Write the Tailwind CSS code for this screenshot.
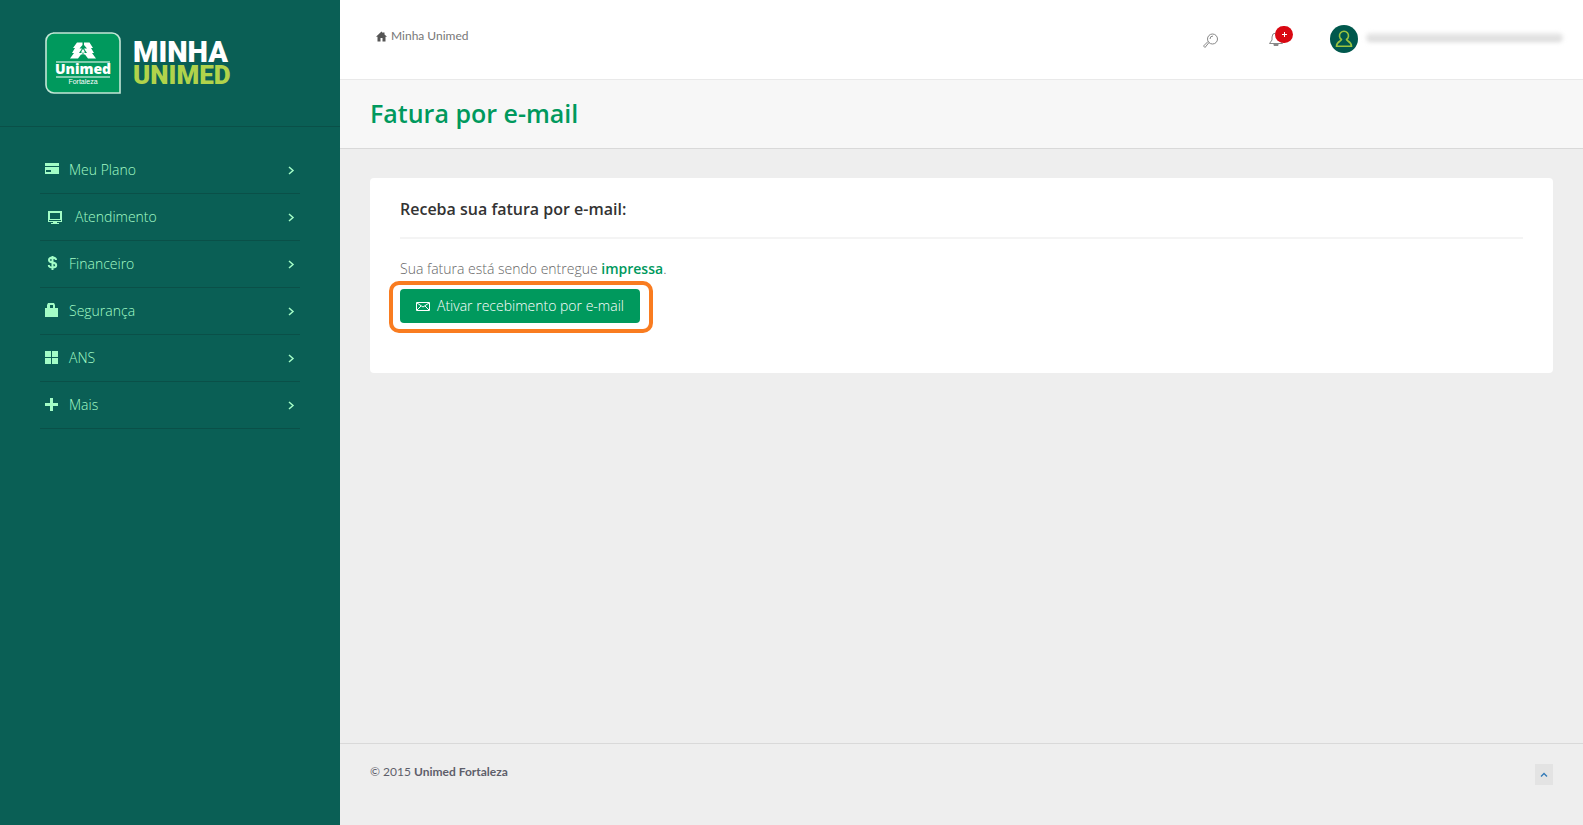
<!DOCTYPE html>
<html lang="pt-BR">
  <head>
    <meta charset="UTF-8" />
    <meta name="viewport" content="width=device-width, initial-scale=1" />
    <title>Minha Unimed - Fatura por e-mail</title>
    <script src="https://cdn.jsdelivr.net/npm/@tailwindcss/browser@4"></script>
  </head>
  <body class="flex min-h-screen bg-[#eeeeee] font-['Open_Sans',sans-serif] text-sm">
    <!-- Sidebar -->
    <aside class="w-[340px] shrink-0 bg-[#0a5f55] font-light text-[#a3fcc6]">
      <a href="#" aria-label="Minha Unimed" class="flex h-[127px] items-start gap-3 border-b border-[#0a5048] pt-8 pl-[45px]">
        <svg class="h-[62px] w-[76px]" viewBox="0 0 76 62">
          <path d="M8 1H67a8 8 0 0 1 8 8V61H9a8 8 0 0 1-8-8V9a8 8 0 0 1 8-8Z" fill="#00995d" stroke="#c3e6d6" stroke-width="1.6" />
          <path d="M32 10.500h5.500v2.500l-3 3.500h2.500l-3 4.500h2.500v-2l1.500-2 1.500 2v2h2.500l-3-4.500H42l-3-3.500v-2.500h5.500l3.500 5.500h-2l3 5h-2l4 5.500h-8l-3-4h-1.500v-1.500l-.5-1-.5 1v1.500H36l-3 4h-8l4-5.500h-2l3-5h-2Z" fill="#fff" />
          <path d="M11 29.500h54v1H11ZM11 44.500h54v1H11Z" fill="#fff" />
          <text x="38" y="42" text-anchor="middle" fill="#fff" font-family="Open Sans" font-size="14" font-weight="800">Unimed</text>
          <text x="38" y="52" text-anchor="middle" fill="#fff" font-family="Liberation Sans" font-size="7">Fortaleza</text>
        </svg>
        <span class="flex flex-col pt-2 font-['Roboto'] font-black text-white">
          <span class="text-[29px] leading-6">MINHA</span>
          <span class="text-[26px] leading-[22px] text-[#b1d34b]">UNIMED</span>
        </span>
      </a>

      <nav class="mx-10 mt-5">
        <a href="#" class="flex h-[47px] items-center border-b border-[#0a5048] pr-[3px] pl-[5px]">
          <svg class="mr-2 size-4" viewBox="0 0 16 16" fill="currentColor"><path d="M0 1h14v3H0ZM0 5h14v7H0Zm1 3v2h5V8Z" fill-rule="evenodd" /></svg>
          <span class="flex-1">Meu Plano</span>
          <svg class="size-3" viewBox="0 0 12 12" fill="none" stroke="currentColor" stroke-width="1.500"><path d="M4 3l4 3.500L4 10" /></svg>
        </a>
        <a href="#" class="flex h-[47px] items-center border-b border-[#0a5048] pr-[3px] pl-2">
          <svg class="mr-[11px] size-4" viewBox="0 0 16 16" fill="currentColor"><path d="M0 2h14v11H9v1h2v1H3v-1h2v-1H0ZM2 4v6h10V4Zm-1 7v1h12v-1Z" fill-rule="evenodd" /></svg>
          <span class="flex-1">Atendimento</span>
          <svg class="size-3" viewBox="0 0 12 12" fill="none" stroke="currentColor" stroke-width="1.500"><path d="M4 3l4 3.500L4 10" /></svg>
        </a>
        <a href="#" class="flex h-[47px] items-center border-b border-[#0a5048] pr-[3px] pl-[5px]">
          <svg class="mr-2 size-4" viewBox="0 0 16 16" fill="none" stroke="currentColor" stroke-width="2"><path d="M11 4C11 2 9.500 1.500 7.500 1.500S4 2 4 4s1.500 2.200 3.500 2.600S11.200 7.500 11.200 9.200 9.500 11.500 7.500 11.500 3.800 11 3.800 9M7.500 0v14" /></svg>
          <span class="flex-1">Financeiro</span>
          <svg class="size-3" viewBox="0 0 12 12" fill="none" stroke="currentColor" stroke-width="1.500"><path d="M4 3l4 3.500L4 10" /></svg>
        </a>
        <a href="#" class="flex h-[47px] items-center border-b border-[#0a5048] pr-[3px] pl-[5px]">
          <svg class="mr-2 size-4" viewBox="0 0 16 16" fill="currentColor"><path d="M0 5h2V2l1-2h6l1 2v3h3v9H0ZM5 5h3V2H5Z" fill-rule="evenodd" /></svg>
          <span class="flex-1">Segurança</span>
          <svg class="size-3" viewBox="0 0 12 12" fill="none" stroke="currentColor" stroke-width="1.500"><path d="M4 3l4 3.500L4 10" /></svg>
        </a>
        <a href="#" class="flex h-[47px] items-center border-b border-[#0a5048] pr-[3px] pl-[5px]">
          <svg class="mr-2 size-4" viewBox="0 0 16 16" fill="currentColor"><path d="M0 1h6v6H0ZM7 1h6v6H7ZM0 8h6v6H0ZM7 8h6v6H7Z" /></svg>
          <span class="flex-1">ANS</span>
          <svg class="size-3" viewBox="0 0 12 12" fill="none" stroke="currentColor" stroke-width="1.500"><path d="M4 3l4 3.500L4 10" /></svg>
        </a>
        <a href="#" class="flex h-[47px] items-center border-b border-[#0a5048] pr-[3px] pl-[5px]">
          <svg class="mr-2 size-4" viewBox="0 0 16 16" fill="currentColor"><path d="M5 1h3v5h5v3H8v5H5V9H0V6h5Z" /></svg>
          <span class="flex-1">Mais</span>
          <svg class="size-3" viewBox="0 0 12 12" fill="none" stroke="currentColor" stroke-width="1.500"><path d="M4 3l4 3.500L4 10" /></svg>
        </a>
      </nav>
    </aside>

    <div class="flex min-w-0 flex-1 flex-col">
      <!-- Top bar -->
      <header class="flex h-20 items-start justify-between border-b border-[#e9e9e9] bg-white pr-5 pl-9">
        <a href="#" class="flex items-center gap-1 pt-[26px] font-['Lato'] text-xs leading-5 text-[#777]">
          <svg class="size-[11px]" viewBox="0 0 11 10" fill="#555"><path d="M5.500 0 7 1.500V1h1.500v2L11 5.300H9.500V10H6.500V6.500H4.500V10H1.500V5.300H0Z" /></svg>
          Minha Unimed
        </a>
        <div class="flex items-start pt-[25px]">
          <button aria-label="Buscar" class="mt-2 mr-[50px]">
            <svg class="size-4" viewBox="0 0 16 16" fill="none" stroke="#888"><circle cx="9.500" cy="6" r="5" /><path d="M6 9.500 2 14.500l-1.500-1.500L5 8.500M7 6a3 3 0 0 1 3-3" /></svg>
          </button>
          <button aria-label="Notificações" class="relative mr-[37px] h-7 w-6">
            <svg class="h-4 w-[14px]" viewBox="0 0 14 16" fill="none" stroke="#888"><path d="M.5 12.500 3 9V6a4 4 0 0 1 8 0v3l2.500 3.500Z" /><path d="M5 13h4v1.500H5Z" fill="#888" /></svg>
            <span class="absolute top-px left-1.5 flex h-[17px] w-[18px] items-center justify-center rounded-full bg-[#d90812]">
              <svg class="size-[5px]" viewBox="0 0 5 5" fill="#fff"><path d="M2 0h1v2h2v1H3v2H2V3H0V2h2Z" /></svg>
            </span>
          </button>
          <button aria-label="Meu perfil" class="flex items-center gap-2">
            <svg class="size-7" viewBox="0 0 28 28"><circle cx="14" cy="14" r="14" fill="#00584d" /><path d="M11.500 14.500A4.500 4.500 0 1 1 16.500 14.500c0 1.500 5 2 5 6.800h-15c0-4.800 5-5.300 5-6.800Z" fill="none" stroke="#9ac440" stroke-width="1.600" /></svg>
            <!-- name hidden for privacy -->
            <span class="mb-1 h-[9px] w-[197px] rounded-full bg-linear-to-b from-[#e8e8e8] via-[#e4e4e4] to-[#d4d4d4] blur-[2px]"></span>
          </button>
        </div>
      </header>

      <div class="flex h-[69px] items-center border-b border-[#d9d9d9] bg-[#f7f7f7] px-[30px]">
        <h1 class="pb-0.5 text-[25px] leading-8 font-semibold text-[#00995d]">Fatura por e-mail</h1>
      </div>

      <main class="flex-1 p-[30px] pt-[29px]">
        <section class="rounded bg-white px-[30px] pt-4 pb-10">
          <h2 class="border-b-2 border-[#f4f4f4] pt-[3px] pb-4 text-base leading-6 font-semibold text-[#333]">Receba sua fatura por e-mail:</h2>
          <p class="pt-5 leading-5 font-light text-[#666]">
            Sua fatura está sendo entregue <strong class="font-semibold text-[#00995d]">impressa</strong>.
          </p>
          <!-- highlighted action -->
          <div class="mt-[2px] -ml-[11px] flex w-fit rounded-[10px] border-4 border-[#f97c20] pt-1 pr-[9px] pb-1.5 pl-[7px]">
            <button class="flex h-[34px] w-60 items-center gap-[7px] rounded bg-[#00995d] pl-4 font-light whitespace-nowrap text-white">
              <svg class="h-[9px] w-[14px] shrink-0" viewBox="0 0 14 9" fill="none" stroke="currentColor"><path d="M.5.500h13v8H.5ZM1 1l6 4 6-4M1 8l4-4M13 8 9 4" /></svg>
              Ativar recebimento por e-mail
            </button>
          </div>
        </section>
      </main>

      <!-- Footer -->
      <footer class="flex h-[82px] items-start justify-between border-t border-[#d9d9d9] px-[30px] pt-5 font-['Lato'] text-xs text-[#5e5e6a]">
        <p>© 2015 <strong>Unimed Fortaleza</strong></p>
        <a href="#" aria-label="Voltar ao topo" class="flex h-[21px] w-[18px] items-center justify-center bg-[#e3e3e3]">
          <svg class="size-2" viewBox="0 0 8 8" fill="none" stroke="#337ab7" stroke-width="1.400"><path d="M1 5.500 4 2.500 7 5.500" /></svg>
        </a>
      </footer>
    </div>
  </body>
</html>
